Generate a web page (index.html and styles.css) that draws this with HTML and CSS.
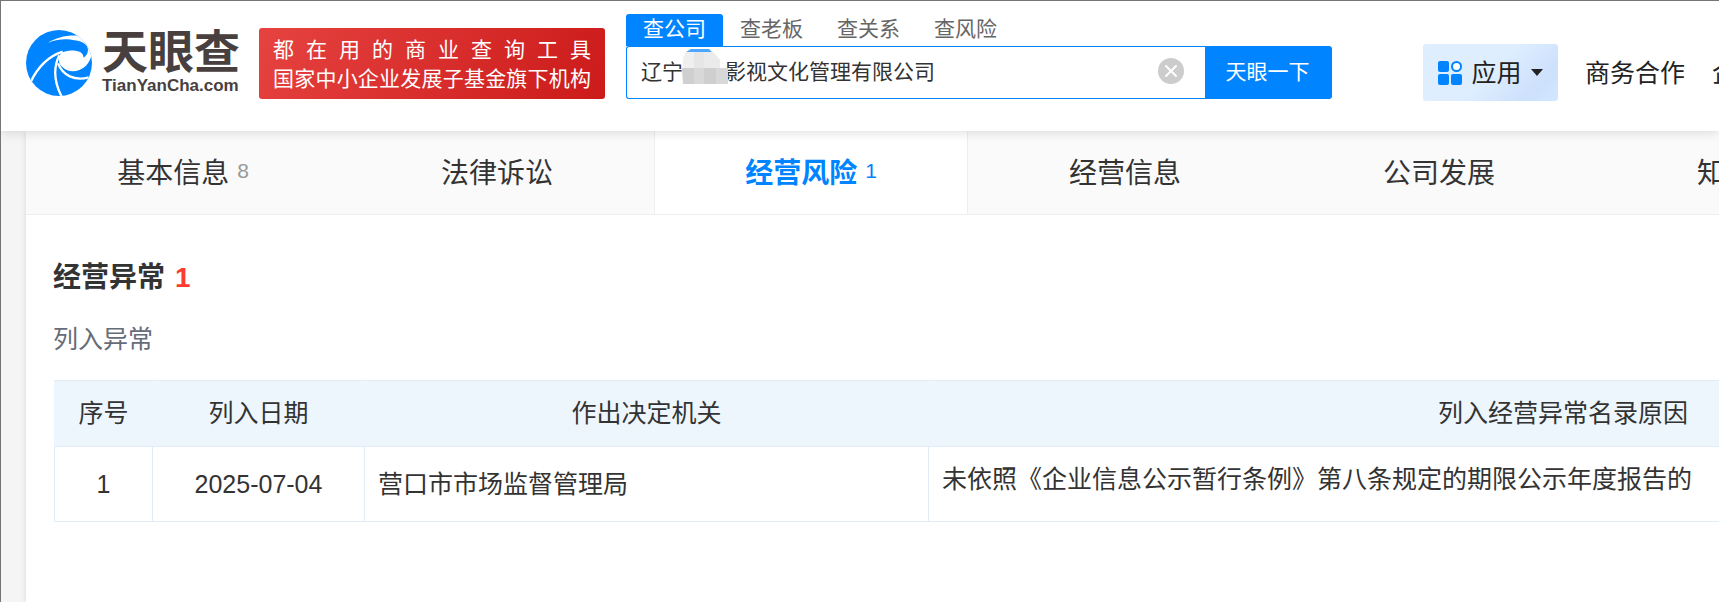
FILE: index.html
```html
<!DOCTYPE html>
<html lang="zh-CN">
<head>
<meta charset="utf-8">
<title>天眼查</title>
<link rel="stylesheet" href="styles.css">
</head>
<body>
<div class="page">
  <header class="header">
    <a class="logo" href="#">
      <svg class="logo-mark" viewBox="12 12 198 198" aria-hidden="true">
        <defs><clipPath id="disc"><circle cx="111" cy="111" r="99"/></clipPath></defs>
        <g clip-path="url(#disc)">
          <rect width="222" height="222" fill="#0084ff"/>
          <path fill="#fff" d="M172 29C135 26 103 34 78 50C112 37 137 38 158 43C184 46 198 58 198 72C197 84 192 91 184 95C186 84 176 76 160 74C143 72 129 74 117 82C107 98 109 115 122 124C140 142 174 138 192 119C202 108 206 98 210 84L222 84V0H172Z"/>
          <path fill="none" stroke="#fff" stroke-width="7" d="M26 168C46 126 76 92 122 77"/>
          <path fill="none" stroke="#fff" stroke-width="7" d="M112 88C92 128 97 170 120 214"/>
          <path fill="none" stroke="#fff" stroke-width="7" d="M108 112C122 148 158 166 200 154"/>
        </g>
      </svg>
      <span class="logo-text">
        <span class="logo-name">天眼查</span>
        <span class="logo-domain">TianYanCha.com</span>
      </span>
    </a>
    <div class="slogan">
      <span class="slogan-line">都 在 用 的 商 业 查 询 工 具</span>
      <span class="slogan-line">国家中小企业发展子基金旗下机构</span>
    </div>
    <form class="search">
      <div class="search-tabs">
        <button class="search-tab search-tab-active" type="button">查公司</button>
        <button class="search-tab" type="button">查老板</button>
        <button class="search-tab" type="button">查关系</button>
        <button class="search-tab" type="button">查风险</button>
      </div>
      <div class="search-row">
        <div class="search-box">
          <input class="search-input" type="text" aria-label="公司名称" value="辽宁　　影视文化管理有限公司">
          <svg class="mosaic" viewBox="0 0 46 36" aria-hidden="true">
            <path fill="#efefef" d="M1 20V10L4 4H31L38 12V20Z"/>
            <path fill="#e6e6e6" d="M12 4H22V20H12Z"/>
            <path fill="#ebebeb" d="M22 4H31L38 12V20H22Z"/>
            <path fill="#4da6ff" d="M4 4L9 1H27L30 4Z"/>
            <path fill="#cfcfcf" d="M0 20H46V36H1Z"/>
            <path fill="#d8d8d8" d="M12 20H22V36H12ZM34 20H46V36H34Z"/>
          </svg>
          <button class="clear" type="button" aria-label="清空">
            <svg class="clear-icon" viewBox="0 0 26 26" aria-hidden="true">
              <circle cx="13" cy="13" r="13" fill="#ccc"/>
              <path d="M8 8L18 18M18 8L8 18" stroke="#fff" stroke-width="2" stroke-linecap="round"/>
            </svg>
          </button>
        </div>
        <button class="search-submit" type="submit">天眼一下</button>
      </div>
    </form>
    <nav class="links">
      <button class="apps" type="button">
        <svg class="apps-icon" viewBox="0 0 24 24" aria-hidden="true">
          <g fill="#0084ff">
            <rect width="11" height="11" rx="2"/>
            <rect y="13" width="11" height="11" rx="2"/>
            <rect x="13" y="13" width="11" height="11" rx="2"/>
          </g>
          <circle cx="18.500" cy="5.500" r="4.500" fill="#fff" stroke="#0084ff" stroke-width="2"/>
        </svg>
        <span class="apps-label">应用</span>
        <svg class="caret" viewBox="0 0 12 7" aria-hidden="true"><path d="M0 0H12L6 7Z" fill="#222"/></svg>
      </button>
      <a class="link" href="#">商务合作</a>
      <a class="link" href="#">企业级产品</a>
    </nav>
  </header>
  <main class="content">
    <nav class="tabs">
      <a class="tab" href="#">基本信息<span class="tab-count">8</span></a>
      <a class="tab" href="#">法律诉讼</a>
      <a class="tab tab-active" href="#">经营风险<span class="tab-count">1</span></a>
      <a class="tab" href="#">经营信息</a>
      <a class="tab" href="#">公司发展</a>
      <a class="tab" href="#">知识产权</a>
    </nav>
    <section class="section">
      <h2 class="section-title">经营异常<span class="section-count">1</span></h2>
      <h3 class="section-subtitle">列入异常</h3>
      <table class="table">
        <colgroup><col class="col-no"><col class="col-date"><col class="col-org"><col class="col-reason"></colgroup>
        <thead>
          <tr><th>序号</th><th>列入日期</th><th>作出决定机关</th><th>列入经营异常名录原因</th></tr>
        </thead>
        <tbody>
          <tr>
            <td class="center">1</td>
            <td class="center">2025-07-04</td>
            <td>营口市市场监督管理局</td>
            <td class="reason">未依照《企业信息公示暂行条例》第八条规定的期限公示年度报告的</td>
          </tr>
        </tbody>
      </table>
    </section>
  </main>
</div>
</body>
</html>
```
FILE: styles.css
```css
* {
  box-sizing: border-box;
}

body {
  margin: 0;
  font-family: "Liberation Sans", "Noto Sans CJK SC", sans-serif;
  font-size: 25px;
  color: #333;
  background: #f5f5f5;
  overflow: hidden;
}

a {
  color: inherit;
  text-decoration: none;
}

button {
  border: 0;
  padding: 0;
  font: inherit;
  color: inherit;
  cursor: pointer;
}

.page {
  display: flex;
  flex-direction: column;
  min-height: 100vh;
  border-top: 1px solid #757575;
  border-left: 1px solid #757575;
  overflow: hidden;
}

.header {
  position: relative;
  z-index: 1;
  display: flex;
  align-items: flex-start;
  height: 130px;
  padding-left: 25px;
  background: #fff;
  box-shadow: 0 2px 10px rgba(0, 0, 0, 0.12);
  white-space: nowrap;
}

.header > * {
  flex: none;
}

.logo {
  display: flex;
  gap: 10px;
  width: 217px;
  margin-top: 29px;
  color: #483f3f;
}

.logo-mark {
  width: 66px;
  height: 66px;
}

.logo-text {
  display: flex;
  flex-direction: column;
  font-weight: bold;
}

.logo-name {
  font-size: 46px;
  line-height: 44px;
}

.logo-domain {
  font-size: 17px;
  line-height: 24px;
}

.slogan {
  width: 346px;
  height: 71px;
  margin: 27px 21px 0 16px;
  padding: 7px 14px;
  border-radius: 3px;
  background: linear-gradient(120deg, #e64340, #cb1a1a);
  color: #fff;
  font-size: 21px;
  line-height: 29px;
}

.slogan-line {
  display: block;
  text-align-last: justify;
}

.search {
  width: 706px;
  margin-top: 13px;
  font-size: 21px;
}

.search-tabs {
  display: flex;
}

.search-tab {
  width: 97px;
  height: 32px;
  padding-bottom: 2px;
  background: none;
  color: #666;
  line-height: 30px;
}

.search-tab-active {
  border-radius: 3px 3px 0 0;
  background: #0084ff;
  color: #fff;
}

.search-row {
  display: flex;
  height: 53px;
}

.search-box {
  position: relative;
  flex: 1;
  display: flex;
  align-items: center;
  padding: 0 21px 4px 14px;
  border: 1px solid #0084ff;
  border-right: 0;
  border-radius: 3px 0 0 3px;
  background: #fff;
}

.search-input {
  flex: 1;
  min-width: 0;
  height: 45px;
  border: 0;
  padding: 0 0 2px;
  outline: 0;
  background: none;
  color: #333;
  font: inherit;
}

.mosaic {
  position: absolute;
  top: 1px;
  left: 55px;
  width: 46px;
  height: 36px;
}

.clear {
  display: flex;
  background: none;
}

.clear-icon {
  width: 26px;
  height: 26px;
}

.search-submit {
  width: 127px;
  padding: 0 2px 6px 0;
  border-radius: 0 3px 3px 0;
  background: #0084ff;
  color: #fff;
}

.links {
  display: flex;
  align-items: center;
  gap: 27px;
  margin: 43px 0 0 91px;
  color: #222;
}

.link,
.apps-label {
  padding-bottom: 4px;
}

.apps {
  display: flex;
  align-items: center;
  justify-content: center;
  gap: 9px;
  width: 135px;
  height: 57px;
  border-radius: 3px;
  background: linear-gradient(135deg, #deeeff 50%, #cde0fc 82%, #d2e8ff);
}

.apps-icon {
  width: 24px;
  height: 24px;
}

.caret {
  width: 12px;
  height: 7px;
}

.content {
  flex: 1;
  margin-left: 25px;
  background: #fff;
  box-shadow: 0 0 6px rgba(0, 0, 0, 0.12);
  overflow-x: clip;
}

.tabs {
  display: flex;
  border-bottom: 1px solid #eee;
  background: #fafafa;
}

.tab {
  flex: none;
  display: flex;
  align-items: center;
  justify-content: center;
  gap: 8px;
  width: 314px;
  height: 83px;
  padding-bottom: 4px;
  font-size: 28px;
}

.tab-active {
  border-left: 1px solid #eee;
  border-right: 1px solid #eee;
  background: #fff;
  color: #0084ff;
  font-weight: bold;
}

.tab-count {
  color: #999;
  font-size: 21px;
  font-weight: normal;
}

.tab-active .tab-count {
  color: #0084ff;
}

.section {
  padding: 42px 27px;
}

.section-title {
  margin: 0;
  font-size: 28px;
  line-height: 42px;
}

.section-count {
  margin-left: 10px;
  color: #ff3b30;
}

.section-subtitle {
  margin: 21px 0 22px;
  color: #666c78;
  font-size: 25px;
  font-weight: normal;
  line-height: 38px;
}

.table {
  width: 2144px;
  margin-left: 1px;
  table-layout: fixed;
  border-collapse: collapse;
  line-height: 37px;
}

.col-no {
  width: 98px;
}

.col-date {
  width: 212px;
}

.col-org {
  width: 564px;
}

.table th,
.table td {
  border: 1px solid #e0edf8;
  padding: 14px 13px;
  font-weight: normal;
  text-align: left;
}

.table th {
  height: 66px;
  border-left-color: #eef6fd;
  border-right-color: #eef6fd;
  background: #eef6fd;
  text-align: center;
}

.table td {
  height: 75px;
}

.table .center {
  text-align: center;
}

.table .reason {
  vertical-align: top;
}
```
